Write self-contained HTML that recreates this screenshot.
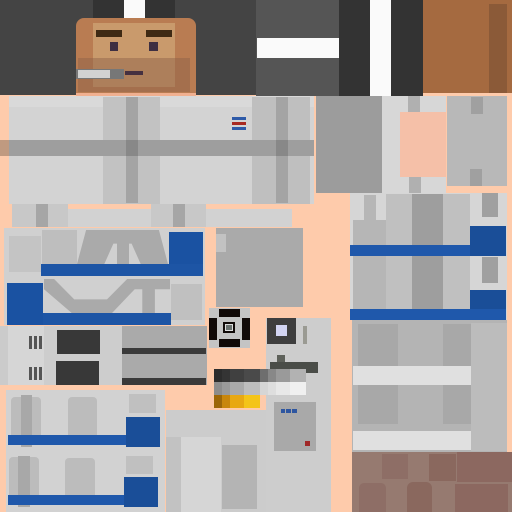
<!DOCTYPE html><html><head><style>
body{margin:0;width:512px;height:512px;background:#fecbab;position:relative;overflow:hidden}
div{position:absolute}
</style></head><body>
<!-- top left head -->
<div style="left:0;top:0;width:256px;height:95px;background:#444"></div>
<div style="left:93px;top:0;width:82px;height:18px;background:#333"></div>
<div style="left:124px;top:0;width:21px;height:18px;background:#fafafa"></div>
<div style="left:76px;top:18px;width:120px;height:77px;background:#b97c52;border-radius:8px 8px 0 0"></div>
<div style="left:93px;top:23px;width:82px;height:64px;background:#c99a6c"></div>
<div style="left:78px;top:58px;width:112px;height:34px;background:rgba(140,95,70,0.45)"></div>
<div style="left:96px;top:30px;width:26px;height:7px;background:#3f2a14"></div>
<div style="left:146px;top:30px;width:26px;height:7px;background:#3f2a14"></div>
<div style="left:110px;top:42px;width:8px;height:9px;background:#3e2f42"></div>
<div style="left:149px;top:42px;width:9px;height:9px;background:#3e2f42"></div>
<div style="left:76px;top:69px;width:48px;height:10px;background:#777"></div>
<div style="left:78px;top:70px;width:32px;height:8px;background:#d2d2d2"></div>
<div style="left:125px;top:71px;width:18px;height:4px;background:#453040"></div>
<div style="left:76px;top:93px;width:120px;height:3px;background:#f0b090"></div>
<!-- top right -->
<div style="left:256px;top:0;width:83px;height:96px;background:#555"></div>
<div style="left:257px;top:38px;width:82px;height:20px;background:#fafafa"></div>
<div style="left:339px;top:0;width:84px;height:96px;background:#333"></div>
<div style="left:370px;top:0;width:21px;height:96px;background:#fafafa"></div>
<div style="left:423px;top:0;width:89px;height:93px;background:#a56a40"></div>
<div style="left:489px;top:4px;width:18px;height:89px;background:#8b5a38"></div>
<!-- body -->
<div style="left:9px;top:96px;width:305px;height:108px;background:#d3d3d3"></div>
<div style="left:9px;top:96px;width:305px;height:11px;background:#d9d9d9"></div>
<div style="left:103px;top:97px;width:57px;height:107px;background:#c2c2c2"></div>
<div style="left:126px;top:97px;width:12px;height:106px;background:#a4a4a4"></div>
<div style="left:252px;top:97px;width:58px;height:107px;background:#bfbfbf"></div>
<div style="left:276px;top:97px;width:12px;height:106px;background:#a4a4a4"></div>
<div style="left:0;top:140px;width:314px;height:16px;background:#9e9e9e"></div>
<div style="left:126px;top:140px;width:12px;height:16px;background:#888"></div>
<div style="left:276px;top:140px;width:12px;height:16px;background:#888"></div>
<div style="left:0;top:140px;width:9px;height:16px;background:#c09a80"></div>
<div style="left:232px;top:117px;width:14px;height:3px;background:#2e5aa8"></div>
<div style="left:232px;top:122px;width:14px;height:3px;background:#a82a22"></div>
<div style="left:232px;top:127px;width:14px;height:3px;background:#2e5aa8"></div>
<div style="left:316px;top:96px;width:66px;height:97px;background:#9c9c9c"></div>
<div style="left:382px;top:96px;width:64px;height:97px;background:#d7d7d7"></div>
<div style="left:408px;top:96px;width:12px;height:16px;background:#b0b0b0"></div>
<div style="left:400px;top:112px;width:46px;height:65px;background:#f5c0a8"></div>
<div style="left:409px;top:177px;width:12px;height:16px;background:#b0b0b0"></div>
<div style="left:447px;top:96px;width:60px;height:90px;background:#b8b8b8"></div>
<div style="left:471px;top:97px;width:12px;height:17px;background:#a0a0a0"></div>
<div style="left:470px;top:169px;width:12px;height:17px;background:#a0a0a0"></div>
<!-- row 204 -->
<div style="left:12px;top:204px;width:56px;height:23px;background:#c8c8c8"></div>
<div style="left:36px;top:204px;width:12px;height:23px;background:#a6a6a6"></div>
<div style="left:68px;top:209px;width:83px;height:18px;background:#d2d2d2"></div>
<div style="left:151px;top:204px;width:55px;height:23px;background:#c8c8c8"></div>
<div style="left:173px;top:204px;width:12px;height:23px;background:#a6a6a6"></div>
<div style="left:206px;top:209px;width:86px;height:18px;background:#d2d2d2"></div>
<!-- left mid panel -->
<div style="left:4px;top:228px;width:201px;height:97px;background:#d0d0d0"></div>
<div style="left:9px;top:236px;width:32px;height:36px;background:#c4c4c4"></div>
<div style="left:42px;top:230px;width:35px;height:34px;background:#bebebe"></div>
<div style="left:77px;top:230px;width:91px;height:34px;background:#aaa;clip-path:polygon(10% 0,90% 0,100% 100%,70% 100%,60% 40%,40% 40%,30% 100%,0 100%)"></div>
<div style="left:117px;top:230px;width:12px;height:34px;background:#aaa"></div>
<div style="left:169px;top:232px;width:34px;height:44px;background:#1a52a2"></div>
<div style="left:41px;top:264px;width:162px;height:12px;background:#1d55a5"></div>
<div style="left:7px;top:283px;width:36px;height:42px;background:#1a52a2"></div>
<div style="left:43px;top:313px;width:128px;height:12px;background:#1d55a5"></div>
<div style="left:44px;top:279px;width:126px;height:34px;background:#aaa;clip-path:polygon(0 0,8% 0,24% 60%,50% 60%,66% 0,100% 0,100% 30%,88% 30%,88% 100%,78% 100%,78% 30%,72% 30%,54% 100%,22% 100%,0 30%)"></div>
<div style="left:171px;top:284px;width:31px;height:36px;background:#c0c0c0"></div>
<div style="left:216px;top:228px;width:87px;height:79px;background:#aaa"></div>
<div style="left:216px;top:234px;width:10px;height:18px;background:#c2c2c2"></div>
<!-- right mid -->
<div style="left:350px;top:193px;width:157px;height:127px;background:#d6d6d6"></div>
<div style="left:353px;top:220px;width:57px;height:90px;background:#b6b6b6"></div>
<div style="left:386px;top:194px;width:28px;height:116px;background:#c0c0c0"></div>
<div style="left:412px;top:194px;width:31px;height:116px;background:#9e9e9e"></div>
<div style="left:443px;top:194px;width:27px;height:116px;background:#c0c0c0"></div>
<div style="left:482px;top:193px;width:16px;height:24px;background:#a0a0a0"></div>
<div style="left:482px;top:257px;width:16px;height:26px;background:#a0a0a0"></div>
<div style="left:364px;top:195px;width:12px;height:25px;background:#b6b6b6"></div>
<div style="left:350px;top:245px;width:120px;height:11px;background:#1f58ab"></div>
<div style="left:470px;top:226px;width:36px;height:30px;background:#1a4e98"></div>
<div style="left:470px;top:290px;width:36px;height:30px;background:#1a4e98"></div>
<div style="left:350px;top:309px;width:156px;height:11px;background:#1f58ab"></div>
<!-- right lower -->
<div style="left:352px;top:320px;width:155px;height:132px;background:#b4b4b4"></div>
<div style="left:358px;top:324px;width:40px;height:100px;background:#a8a8a8"></div>
<div style="left:443px;top:324px;width:28px;height:100px;background:#a8a8a8"></div>
<div style="left:471px;top:323px;width:36px;height:128px;background:#bcbcbc"></div>
<div style="left:353px;top:366px;width:118px;height:19px;background:#e0e0e0"></div>
<div style="left:353px;top:431px;width:118px;height:19px;background:#e0e0e0"></div>
<div style="left:352px;top:452px;width:160px;height:60px;background:#967a70"></div>
<div style="left:382px;top:454px;width:26px;height:25px;background:#8e6e66"></div>
<div style="left:429px;top:454px;width:27px;height:27px;background:#8a685e"></div>
<div style="left:457px;top:452px;width:55px;height:30px;background:#8c6860"></div>
<div style="left:359px;top:483px;width:27px;height:29px;background:#8e6e66;border-radius:5px 5px 0 0"></div>
<div style="left:407px;top:482px;width:25px;height:30px;background:#8a685e;border-radius:6px 6px 0 0"></div>
<div style="left:455px;top:484px;width:53px;height:28px;background:#8c6860"></div>
<!-- left row 326 -->
<div style="left:0;top:326px;width:122px;height:59px;background:#d6d6d6"></div>
<div style="left:0;top:326px;width:8px;height:59px;background:#cbcbcb"></div>
<div style="left:44px;top:326px;width:78px;height:59px;background:#cdcdcd"></div>
<div style="left:29px;top:336px;width:3px;height:13px;background:#555"></div>
<div style="left:34px;top:336px;width:3px;height:13px;background:#555"></div>
<div style="left:39px;top:336px;width:3px;height:13px;background:#555"></div>
<div style="left:29px;top:367px;width:3px;height:13px;background:#555"></div>
<div style="left:34px;top:367px;width:3px;height:13px;background:#555"></div>
<div style="left:39px;top:367px;width:3px;height:13px;background:#555"></div>
<div style="left:57px;top:330px;width:43px;height:24px;background:#383838"></div>
<div style="left:56px;top:361px;width:43px;height:24px;background:#383838"></div>
<div style="left:122px;top:326px;width:85px;height:59px;background:#aaa"></div>
<div style="left:122px;top:348px;width:84px;height:6px;background:#3a3a3a"></div>
<div style="left:122px;top:378px;width:84px;height:7px;background:#3a3a3a"></div>
<!-- eye piece -->
<div style="left:209px;top:308px;width:41px;height:40px;background:#c4c4c4"></div>
<div style="left:219px;top:309px;width:21px;height:8px;background:#110a08"></div>
<div style="left:219px;top:339px;width:21px;height:8px;background:#110a08"></div>
<div style="left:209px;top:318px;width:8px;height:22px;background:#110a08"></div>
<div style="left:242px;top:318px;width:8px;height:22px;background:#110a08"></div>
<div style="left:223px;top:322px;width:12px;height:11px;background:#110a08"></div>
<div style="left:225px;top:324px;width:8px;height:7px;background:#ddd"></div>
<div style="left:226px;top:325px;width:6px;height:5px;background:#6a716e"></div>
<!-- center lower panel -->
<div style="left:266px;top:318px;width:65px;height:194px;background:#cdcdcd"></div>
<div style="left:267px;top:318px;width:29px;height:26px;background:#3e3e3e"></div>
<div style="left:276px;top:325px;width:11px;height:11px;background:#d2d4f2"></div>
<div style="left:303px;top:326px;width:4px;height:18px;background:#9a9a92"></div>
<div style="left:277px;top:355px;width:8px;height:8px;background:#5e615a"></div>
<div style="left:270px;top:362px;width:48px;height:11px;background:#4a4d48"></div>
<div style="left:166px;top:410px;width:100px;height:102px;background:#cccccc"></div>
<div style="left:160px;top:390px;width:5px;height:122px;background:#d0d0d0"></div>
<div style="left:166px;top:437px;width:15px;height:75px;background:#c2c2c2"></div>
<div style="left:181px;top:437px;width:40px;height:75px;background:#d6d6d6"></div>
<div style="left:222px;top:445px;width:35px;height:64px;background:#b4b4b4"></div>
<div style="left:274px;top:402px;width:42px;height:49px;background:#a9a9a9"></div>
<div style="left:281px;top:409px;width:4px;height:4px;background:#2e56a0"></div>
<div style="left:286px;top:409px;width:5px;height:4px;background:#2e56a0"></div>
<div style="left:292px;top:409px;width:5px;height:4px;background:#2e56a0"></div>
<div style="left:305px;top:441px;width:5px;height:5px;background:#a02828"></div>
<!-- palette -->
<div style="left:214px;top:369px;width:92px;height:13px;background:linear-gradient(90deg,#2c2c2c 0 8px,#343434 8px 16px,#404040 16px 30px,#4a4a4a 30px 46px,#6e6e6e 46px 54px,#888 54px 62px,#9a9a9a 62px 76px,#b2b2b2 76px)"></div>
<div style="left:214px;top:382px;width:92px;height:13px;background:linear-gradient(90deg,#8c8c8c 0 8px,#9a9a9a 8px 16px,#aaa 16px 30px,#bdbdbd 30px 46px,#d6d6d6 46px 54px,#dedede 54px 62px,#e8e8e8 62px 76px,#f0f0f0 76px)"></div>
<div style="left:214px;top:395px;width:46px;height:13px;background:linear-gradient(90deg,#9c6608 0 8px,#c8860c 8px 16px,#e8a812 16px 30px,#f4c418 30px)"></div>
<!-- bottom-left panel -->
<div style="left:6px;top:390px;width:159px;height:122px;background:#d2d2d2"></div>
<div style="left:11px;top:397px;width:30px;height:45px;background:#bcbcbc;border-radius:4px 4px 0 0"></div>
<div style="left:21px;top:395px;width:11px;height:52px;background:#a8a8a8"></div>
<div style="left:68px;top:397px;width:29px;height:45px;background:#bcbcbc;border-radius:4px 4px 0 0"></div>
<div style="left:129px;top:394px;width:27px;height:19px;background:#c0c0c0"></div>
<div style="left:8px;top:435px;width:120px;height:10px;background:#1f58ab"></div>
<div style="left:126px;top:417px;width:34px;height:30px;background:#1a4e98"></div>
<div style="left:9px;top:457px;width:30px;height:45px;background:#bcbcbc;border-radius:4px 4px 0 0"></div>
<div style="left:18px;top:456px;width:12px;height:51px;background:#a8a8a8"></div>
<div style="left:65px;top:458px;width:30px;height:45px;background:#bcbcbc;border-radius:4px 4px 0 0"></div>
<div style="left:126px;top:456px;width:27px;height:18px;background:#c0c0c0"></div>
<div style="left:8px;top:495px;width:118px;height:10px;background:#1f58ab"></div>
<div style="left:124px;top:477px;width:34px;height:30px;background:#1a4e98"></div>
</body></html>
